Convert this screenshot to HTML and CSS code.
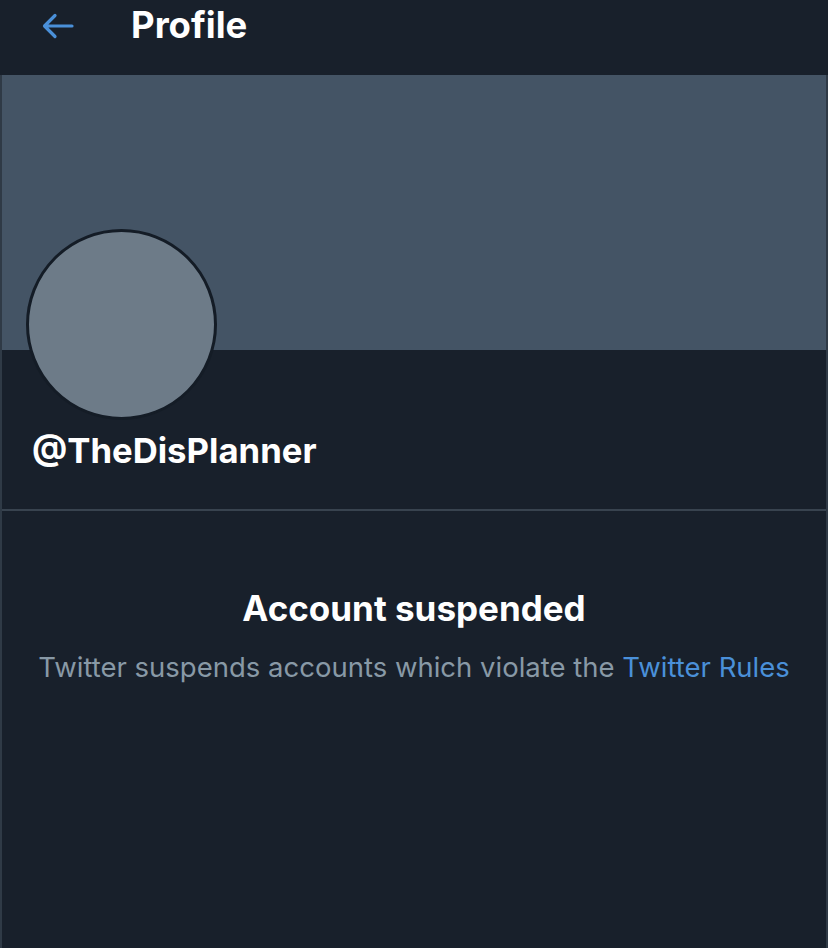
FILE: index.html
```html
<!DOCTYPE html>
<html lang="en">
<head>
<meta charset="utf-8">
<title>Profile</title>
<link rel="stylesheet" href="styles.css">
</head>
<body>
<header class="topbar">
  <svg class="back" width="34" height="26" viewBox="0 0 34 26" aria-hidden="true">
    <path d="M31 13H4M14 2.5L3.5 13L14 23.5" fill="none" stroke="#4a90d9" stroke-width="3.2" stroke-linecap="round" stroke-linejoin="round"/>
  </svg>
  <h1 class="title">Profile</h1>
</header>
<main class="profile">
  <div class="banner"></div>
  <section class="identity">
    <div class="avatar"></div>
    <div class="handle">@TheDisPlanner</div>
  </section>
  <section class="suspended">
    <h2 class="susp-title">Account suspended</h2>
    <p class="susp-text">Twitter suspends accounts which violate the <a class="link" href="#">Twitter Rules</a></p>
  </section>
</main>
</body>
</html>
```
FILE: styles.css
```css
html, body {
  margin: 0;
  padding: 0;
  background: #18202b;
  height: 100%;
}
body {
  font-family: Inter, "Noto Sans", sans-serif;
  color: #ffffff;
  overflow: hidden;
}
.topbar {
  height: 75px;
  display: flex;
  align-items: center;
  padding-left: 41px;
  box-sizing: border-box;
  padding-bottom: 24px;
}
.back {
  display: block;
  flex: none;
}
.title {
  margin: 0 0 0 56px;
  font-size: 36.5px;
  font-weight: 700;
  line-height: 1;
}
.profile {
  border-left: 2px solid #2f3a46;
  border-right: 2px solid #2f3a46;
  height: calc(100% - 75px);
  box-sizing: border-box;
}
.banner {
  height: 275px;
  background: #445465;
}
.identity {
  display: flex;
  flex-direction: column;
  align-items: flex-start;
  padding: 0 0 0 24px;
  border-bottom: 2px solid #38434f;
  height: 159px;
}
.avatar {
  width: 185px;
  height: 185px;
  border-radius: 50%;
  background: #6d7b88;
  border: 3px solid #141c26;
  margin-top: -121px;
  flex: none;
}
.handle {
  margin-top: 10px;
  margin-left: 6px;
  font-size: 34.7px;
  font-weight: 700;
  line-height: 40px;
}
.suspended {
  text-align: center;
  padding-top: 77px;
}
.susp-title {
  margin: 0;
  font-size: 35px;
  font-weight: 700;
  line-height: 40px;
}
.susp-text {
  margin: 22px 0 0;
  font-size: 27.5px;
  line-height: 34px;
  color: #8899a6;
}
.link {
  color: #4a90d9;
  text-decoration: none;
}
```
